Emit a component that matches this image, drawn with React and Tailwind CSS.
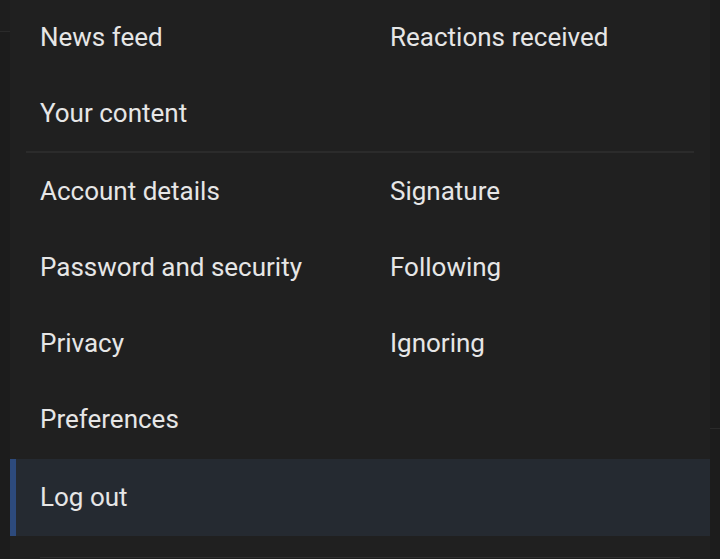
const topLinks = [
  ['News feed', 'Reactions received'],
  ['Your content', null],
]

const accountLinks = [
  ['Account details', 'Signature'],
  ['Password and security', 'Following'],
  ['Privacy', 'Ignoring'],
  ['Preferences', null],
]

function LinkGrid({ rows }) {
  return (
    <div className="grid grid-cols-[350px_1fr] px-[16px]">
      {rows.map(([left, right], i) => (
        <div key={i} className="contents">
          <a className="flex h-[76px] items-center pl-[14px] text-[26px] text-[#e6e6e6]">{left}</a>
          {right ? (
            <a className="flex h-[76px] items-center pl-[14px] text-[26px] text-[#e6e6e6]">{right}</a>
          ) : (
            <span />
          )}
        </div>
      ))}
    </div>
  )
}

export default function App() {
  return (
    <div
      className="flex h-[559px] w-[720px] overflow-hidden bg-[#1c1c1c]"
      style={{ fontFamily: 'Roboto, "Noto Sans", sans-serif' }}
    >
      {/* page behind the menu */}
      <div className="w-[10px] shrink-0">
        <div className="h-[32px] border-b border-[#2a2a2a] bg-[#1e1e1e]" />
      </div>

      {/* menu panel */}
      <div className="flex flex-1 flex-col bg-[#202020]">
        <div className="-mt-px">
          <LinkGrid rows={topLinks} />
        </div>
        <div className="mx-[16px] h-[2px] bg-[#2b2b2b]" />
        <LinkGrid rows={accountLinks} />
        <a className="mt-[2px] flex h-[77px] items-center border-l-[6px] border-[#2d4a7c] bg-[#252a31] pl-[24px] text-[26px] text-[#e6e6e6]">
          Log out
        </a>
        <div className="mx-[30px] mt-[21px] h-[1px] bg-[#2e2e2e]" />
      </div>

      <div className="w-[10px] shrink-0">
        <div className="h-[429px] border-b border-[#2a2a2a]" />
      </div>
    </div>
  )
}
